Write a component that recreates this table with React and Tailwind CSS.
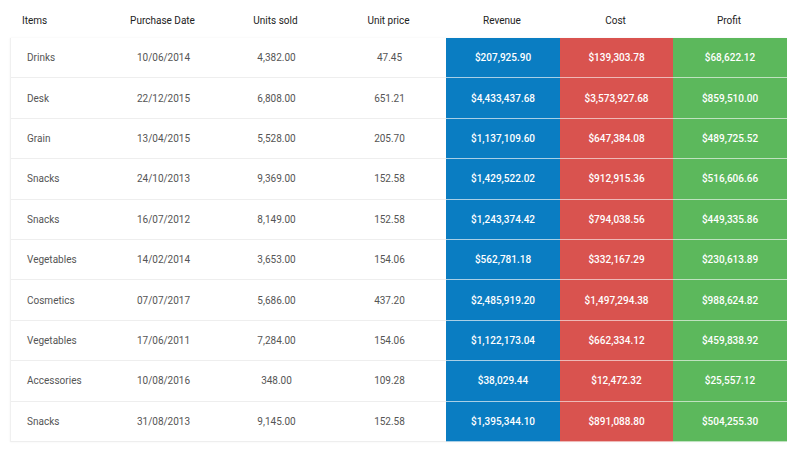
import React from 'react';

const rows = [
    ['Drinks', '10/06/2014', '4,382.00', '47.45', '$207,925.90', '$139,303.78', '$68,622.12'],
    ['Desk', '22/12/2015', '6,808.00', '651.21', '$4,433,437.68', '$3,573,927.68', '$859,510.00'],
    ['Grain', '13/04/2015', '5,528.00', '205.70', '$1,137,109.60', '$647,384.08', '$489,725.52'],
    ['Snacks', '24/10/2013', '9,369.00', '152.58', '$1,429,522.02', '$912,915.36', '$516,606.66'],
    ['Snacks', '16/07/2012', '8,149.00', '152.58', '$1,243,374.42', '$794,038.56', '$449,335.86'],
    ['Vegetables', '14/02/2014', '3,653.00', '154.06', '$562,781.18', '$332,167.29', '$230,613.89'],
    ['Cosmetics', '07/07/2017', '5,686.00', '437.20', '$2,485,919.20', '$1,497,294.38', '$988,624.82'],
    ['Vegetables', '17/06/2011', '7,284.00', '154.06', '$1,122,173.04', '$662,334.12', '$459,838.92'],
    ['Accessories', '10/08/2016', '348.00', '109.28', '$38,029.44', '$12,472.32', '$25,557.12'],
    ['Snacks', '31/08/2013', '9,145.00', '152.58', '$1,395,344.10', '$891,088.80', '$504,255.30'],
];

const cols = 'grid grid-cols-[96px_113px_113px_113px_114px_113px_114px]';

export default function App() {
    return (
        <div className="w-[800px] h-[450px] bg-white px-[10px] font-['Roboto',sans-serif] text-[10px] overflow-hidden">
            <div className={`${cols} h-[38px] pt-[3px] items-center text-[#222]`}>
                <div className="pl-3">Items</div>
                <div className="text-center">Purchase Date</div>
                <div className="text-center">Units sold</div>
                <div className="text-center">Unit price</div>
                <div className="text-center">Revenue</div>
                <div className="text-center">Cost</div>
                <div className="text-center">Profit</div>
            </div>
            <div className="w-[776px] border-l border-[#f0f0f0] shadow-[0_0_2px_rgba(0,0,0,0.06)]">
                {rows.map((r, i) => (
                    <div key={i} className={`${cols} h-[40.4px] text-[#555]`}>
                        <div className="pl-4 flex items-center border-b border-[#eeeeee]">{r[0]}</div>
                        <div className="flex items-center justify-center border-b border-[#eeeeee]">{r[1]}</div>
                        <div className="flex items-center justify-center border-b border-[#eeeeee]">{r[2]}</div>
                        <div className="flex items-center justify-center border-b border-[#eeeeee]">{r[3]}</div>
                        <div className="flex items-center justify-center bg-[#0a7dc2] text-white font-medium border-b border-[#a9cfe6]">{r[4]}</div>
                        <div className="flex items-center justify-center bg-[#d9534f] text-white font-medium border-b border-[#eeb9b7]">{r[5]}</div>
                        <div className="flex items-center justify-center bg-[#5cb85c] text-white font-medium border-b border-[#bfe2bf]">{r[6]}</div>
                    </div>
                ))}
            </div>
        </div>
    );
}
